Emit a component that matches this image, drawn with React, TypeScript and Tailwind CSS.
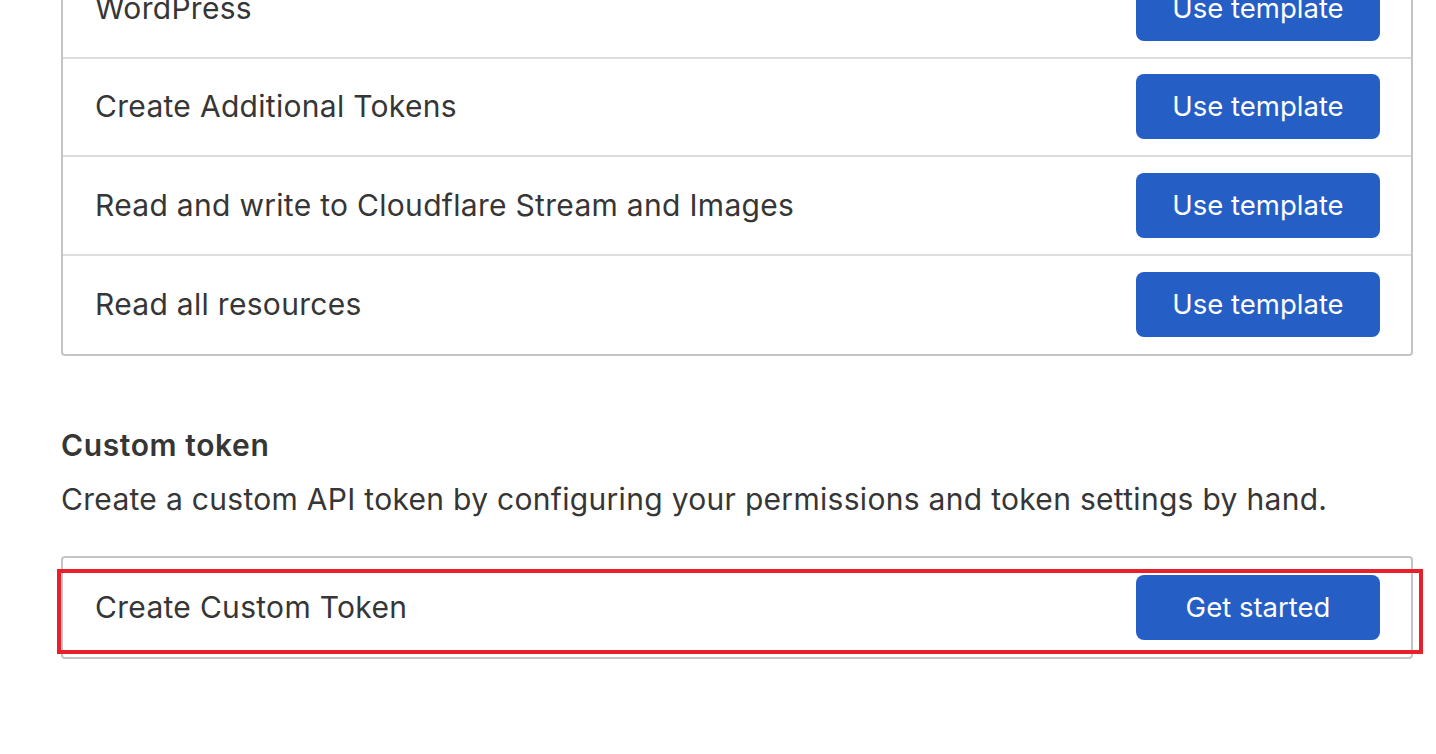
const templates = [
  { name: "WordPress", action: "Use template" },
  { name: "Create Additional Tokens", action: "Use template" },
  { name: "Read and write to Cloudflare Stream and Images", action: "Use template" },
  { name: "Read all resources", action: "Use template" },
];

function Row({ name, action, last }: { name: string; action: string; last?: boolean }) {
  return (
    <div
      className={
        "flex h-[98.5px] items-center justify-between pl-[32px] pr-[31px] " +
        (last ? "" : "border-b-2 border-[#dddddd]")
      }
    >
      <span className="text-[30px] tracking-[0.01em] text-[#363636]">{name}</span>
      <button className="h-[65px] w-[244px] rounded-[8px] bg-[#255ec5] text-[27.5px] text-white">
        {action}
      </button>
    </div>
  );
}

export default function App() {
  return (
    <div className="h-[754px] overflow-hidden bg-white pl-[61px] pr-[23px] font-['Inter',sans-serif]">
      <div className="-mt-[42px] rounded-[4px] border-2 border-[#c4c4c4]">
        {templates.map((t, i) => (
          <Row key={t.name} name={t.name} action={t.action} last={i === templates.length - 1} />
        ))}
      </div>

      <h2 className="mt-[71px] text-[30px] leading-[36px] font-semibold tracking-[0.02em] text-[#363636]">
        Custom token
      </h2>
      <p className="mt-[18px] text-[30px] leading-[36px] tracking-[0.01em] text-[#363636]">
        Create a custom API token by configuring your permissions and token settings by hand.
      </p>

      <div className="mt-[39px] rounded-[4px] border-2 border-[#c4c4c4]">
        <div className="relative">
          <Row name="Create Custom Token" action="Get started" last />
          <div className="pointer-events-none absolute -left-[6px] -right-[12px] top-[11px] bottom-[3px] border-4 border-[#e8202a]" />
        </div>
      </div>
    </div>
  );
}
